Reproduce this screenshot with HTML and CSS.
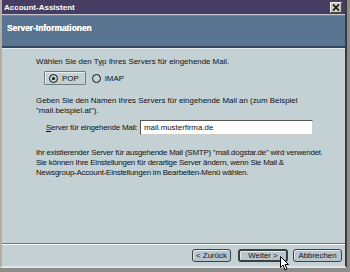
FILE: index.html
```html
<!DOCTYPE html>
<html lang="de">

<head>
    <meta charset="UTF-8">
    <title>Account-Assistent</title>
    <link rel="stylesheet" href="styles.css">
</head>

<body>
    <div class="window">
        <div class="titlebar">
            <span class="title">Account-Assistent</span>
            <span class="close">
                <svg width="8" height="7" viewBox="0 0 8 7">
                    <path d="M1 0.5 L7 6.5 M7 0.5 L1 6.5" stroke="#111" stroke-width="1.6" />
                </svg>
            </span>
        </div>
        <div class="banner">Server-Informationen</div>
        <div class="content">
            <p class="line">Wählen Sie den Typ Ihres Servers für eingehende Mail.</p>
            <div class="radio-row">
                <label class="radio focused"><span class="dot checked"></span>POP</label>
                <label class="radio"><span class="dot"></span>IMAP</label>
            </div>
            <p class="para">Geben Sie den Namen Ihres Servers für eingehende Mail an (zum Beispiel<br>"mail.beispiel.at").</p>
            <div class="field-row">
                <span class="field-label"><u>S</u>erver für eingehende Mail:</span>
                <span class="field">mail.musterfirma.de</span>
            </div>
            <p class="para smtp">Ihr existierender Server für ausgehende Mail (SMTP) "mail.dogstar.de" wird verwendet.<br>Sie können Ihre Einstellungen für derartige Server ändern, wenn Sie Mail &amp;<br>Newsgroup-Account-Einstellungen im Bearbeiten-Menü wählen.</p>
        </div>
        <div class="buttons">
            <span class="btn back">&lt; Zurück</span>
            <span class="btn default">Weiter &gt;
                <svg class="cursor" width="10" height="15" viewBox="0 0 10 15">
                    <path d="M0.5 0.5 L0.5 11.5 L3 9 L5 14 L7 13 L5 8.5 L8.5 8.5 Z" fill="#fff" stroke="#000" stroke-width="1" />
                </svg>
            </span>
            <span class="btn cancel">Abbrechen</span>
        </div>
    </div>
</body>

</html>
```

FILE: styles.css
```css
body,
html {
    margin: 0;
    padding: 0;
    width: 100%;
    height: 100%;
    overflow: hidden;
    background-color: #8d8c88;
    font-family: 'Liberation Sans', Arial, sans-serif;
    font-size: 7.9px;
    color: #111;
}

.window {
    width: 343px;
    height: 266px;
    display: flex;
    flex-direction: column;
    border-left: 2px solid #b3ac9f;
    border-right: 2px solid #3c3a3a;
    border-bottom: 2px solid #dfe6ea;
    background-color: #c3d0d4;
    white-space: nowrap;
}

.titlebar {
    height: 14px;
    display: flex;
    align-items: center;
    justify-content: space-between;
    padding: 0 3px 0 2px;
    background-color: #463e62;
    border-bottom: 1px solid #c5c3cc;
    color: white;
    font-weight: bold;
    font-size: 8px;
}

.close {
    width: 10px;
    height: 9px;
    display: flex;
    align-items: center;
    justify-content: center;
    background-color: #c9c6bd;
    border: 1px solid #f2f0ea;
    border-right-color: #4a4a4a;
    border-bottom-color: #4a4a4a;
}

.banner {
    height: 33px;
    padding: 7px 5px 0;
    box-sizing: border-box;
    background-color: #5a7592;
    border-bottom: 2px solid #33475e;
    border-top: 1px solid #6e88a3;
    color: white;
    font-weight: bold;
    font-size: 8.4px;
    text-shadow: 0 0 0.5px #fff;
}

.content {
    flex: 1;
    padding: 8px 0 0 34px;
    border-top: 1px solid #e4ecef;
}

.line,
.para {
    margin: 0;
    line-height: 10px;
}

.radio-row {
    display: flex;
    align-items: center;
    gap: 3px;
    margin: 4px 0 0 8px;
}

.radio {
    display: flex;
    align-items: center;
    gap: 4px;
    height: 12px;
    padding: 0 6px 0 4px;
    border: 1px solid transparent;
}

.radio.focused {
    border-color: #6f7c82;
    border-radius: 1px;
    box-shadow: inset 1px 1px 0 #e8eef0;
}

.radio + .radio {
    padding-left: 2px;
}

.dot {
    width: 7px;
    height: 7px;
    border: 1px solid #111;
    border-radius: 50%;
    background-color: #c3d0d4;
    display: flex;
    align-items: center;
    justify-content: center;
}

.dot.checked::after {
    content: '';
    width: 3px;
    height: 3px;
    border-radius: 50%;
    background-color: #111;
}

.para {
    margin-top: 11px;
}

.field-row {
    display: flex;
    align-items: center;
    margin: 4px 0 0 10px;
}

.field-label {
    width: 94px;
    flex-shrink: 0;
    letter-spacing: -0.2px;
}

.field {
    width: 168px;
    height: 13px;
    line-height: 13px;
    padding-left: 3px;
    background-color: white;
    border: 1px solid #555;
    border-right-color: #ccc;
    border-bottom-color: #ccc;
}

.smtp {
    margin-top: 13px;
    letter-spacing: -0.2px;
}

.buttons {
    height: 22px;
    display: flex;
    justify-content: flex-end;
    align-items: center;
    gap: 5px;
    padding-right: 3px;
    border-top: 1px solid #6f7b80;
    box-shadow: inset 0 1px 0 #f4f8f9;
}

.btn {
    position: relative;
    box-sizing: border-box;
    height: 13px;
    line-height: 11px;
    background-color: #b9c5cc;
    border: 1px solid #3a3f42;
    border-radius: 3px;
    box-shadow: inset 1px 1px 0 #e6ecef;
    text-align: center;
}

.back {
    width: 39px;
    margin-right: 2px;
}

.default {
    width: 50px;
    line-height: 9px;
    border-width: 2px;
}

.cancel {
    width: 49px;
}

.cursor {
    position: absolute;
    left: 40px;
    top: 5px;
}
```
